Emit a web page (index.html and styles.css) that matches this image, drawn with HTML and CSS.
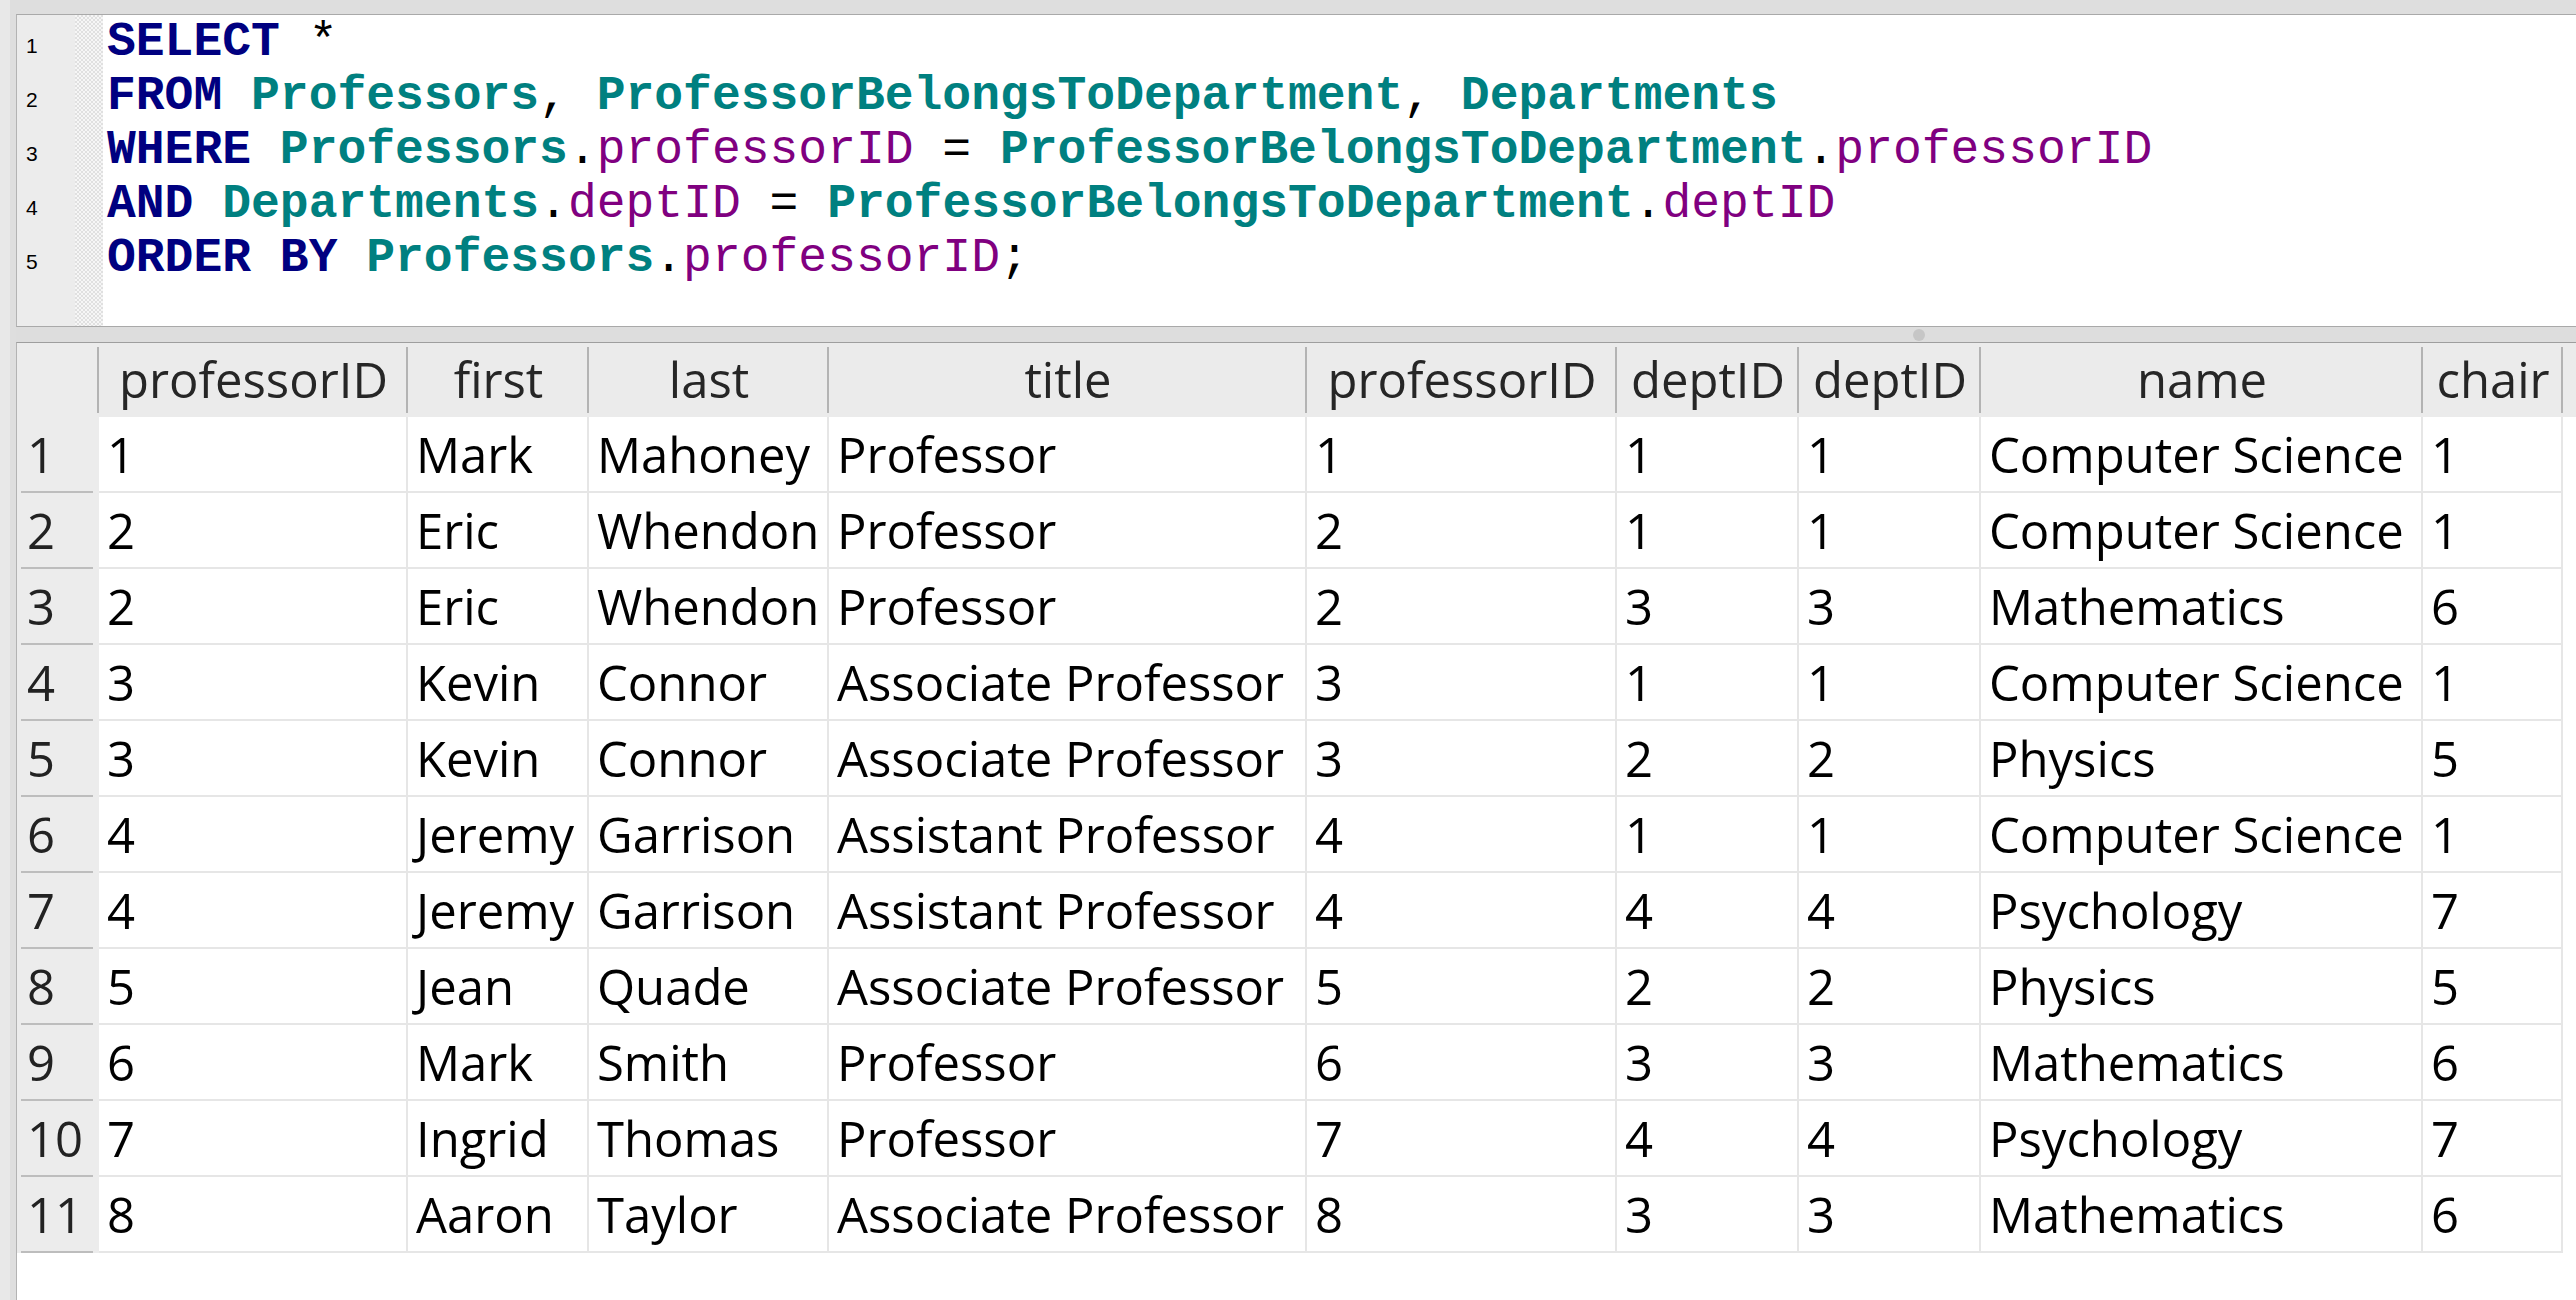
FILE: index.html
```html
<!DOCTYPE html>
<html>
<head>
<meta charset="utf-8">
<title>Query</title>
<link rel="stylesheet" href="styles.css">
</head>
<body>
<div class="window">
  <div class="editor">
    <div class="gutter">
      <div>1</div><div>2</div><div>3</div><div>4</div><div>5</div>
    </div>
    <div class="ruler"></div>
    <div class="code"><div><span class="kw">SELECT</span> *</div><div><span class="kw">FROM</span> <span class="tb">Professors</span>, <span class="tb">ProfessorBelongsToDepartment</span>, <span class="tb">Departments</span></div><div><span class="kw">WHERE</span> <span class="tb">Professors</span>.<span class="cl">professorID</span> = <span class="tb">ProfessorBelongsToDepartment</span>.<span class="cl">professorID</span></div><div><span class="kw">AND</span> <span class="tb">Departments</span>.<span class="cl">deptID</span> = <span class="tb">ProfessorBelongsToDepartment</span>.<span class="cl">deptID</span></div><div><span class="kw">ORDER BY</span> <span class="tb">Professors</span>.<span class="cl">professorID</span>;</div></div>
  </div>
  <div class="splitter"><span class="grip"></span></div>
  <div class="results">
    <div class="h rnh"></div><div class="h">professorID</div><div class="h">first</div><div class="h">last</div><div class="h">title</div><div class="h">professorID</div><div class="h">deptID</div><div class="h">deptID</div><div class="h">name</div><div class="h">chair</div><div class="hf"></div>

    <div class="rn">1</div><div class="c">1</div><div class="c">Mark</div><div class="c">Mahoney</div><div class="c">Professor</div><div class="c">1</div><div class="c">1</div><div class="c">1</div><div class="c">Computer Science</div><div class="c">1</div><div class="f"></div>
    <div class="rn">2</div><div class="c">2</div><div class="c">Eric</div><div class="c">Whendon</div><div class="c">Professor</div><div class="c">2</div><div class="c">1</div><div class="c">1</div><div class="c">Computer Science</div><div class="c">1</div><div class="f"></div>
    <div class="rn">3</div><div class="c">2</div><div class="c">Eric</div><div class="c">Whendon</div><div class="c">Professor</div><div class="c">2</div><div class="c">3</div><div class="c">3</div><div class="c">Mathematics</div><div class="c">6</div><div class="f"></div>
    <div class="rn">4</div><div class="c">3</div><div class="c">Kevin</div><div class="c">Connor</div><div class="c">Associate Professor</div><div class="c">3</div><div class="c">1</div><div class="c">1</div><div class="c">Computer Science</div><div class="c">1</div><div class="f"></div>
    <div class="rn">5</div><div class="c">3</div><div class="c">Kevin</div><div class="c">Connor</div><div class="c">Associate Professor</div><div class="c">3</div><div class="c">2</div><div class="c">2</div><div class="c">Physics</div><div class="c">5</div><div class="f"></div>
    <div class="rn">6</div><div class="c">4</div><div class="c">Jeremy</div><div class="c">Garrison</div><div class="c">Assistant Professor</div><div class="c">4</div><div class="c">1</div><div class="c">1</div><div class="c">Computer Science</div><div class="c">1</div><div class="f"></div>
    <div class="rn">7</div><div class="c">4</div><div class="c">Jeremy</div><div class="c">Garrison</div><div class="c">Assistant Professor</div><div class="c">4</div><div class="c">4</div><div class="c">4</div><div class="c">Psychology</div><div class="c">7</div><div class="f"></div>
    <div class="rn">8</div><div class="c">5</div><div class="c">Jean</div><div class="c">Quade</div><div class="c">Associate Professor</div><div class="c">5</div><div class="c">2</div><div class="c">2</div><div class="c">Physics</div><div class="c">5</div><div class="f"></div>
    <div class="rn">9</div><div class="c">6</div><div class="c">Mark</div><div class="c">Smith</div><div class="c">Professor</div><div class="c">6</div><div class="c">3</div><div class="c">3</div><div class="c">Mathematics</div><div class="c">6</div><div class="f"></div>
    <div class="rn">10</div><div class="c">7</div><div class="c">Ingrid</div><div class="c">Thomas</div><div class="c">Professor</div><div class="c">7</div><div class="c">4</div><div class="c">4</div><div class="c">Psychology</div><div class="c">7</div><div class="f"></div>
    <div class="rn">11</div><div class="c">8</div><div class="c">Aaron</div><div class="c">Taylor</div><div class="c">Associate Professor</div><div class="c">8</div><div class="c">3</div><div class="c">3</div><div class="c">Mathematics</div><div class="c">6</div><div class="f"></div>
  </div>
</div>
</body>
</html>
```

FILE: styles.css
```css
html, body {
  margin: 0;
  padding: 0;
}
body {
  background: #e8e8e8;
  font-family: "Open Sans", "Noto Sans", sans-serif;
  overflow: hidden;
}
.window {
  margin-left: 10px;
  height: 1300px;
  box-sizing: border-box;
  padding: 14px 0 0 6px;
  background: #dedede;
  display: flex;
  flex-direction: column;
  overflow: hidden;
}
.editor {
  height: 313px;
  flex: none;
  box-sizing: border-box;
  border-top: 1px solid #a9a9a9;
  border-bottom: 1px solid #a9a9a9;
  border-left: 1px solid #b3b3b3;
  background: #ffffff;
  display: grid;
  grid-template-columns: 58px 28px 1fr;
}
.gutter {
  background: #ececec;
  padding: 4px 0 0 9px;
  font-family: "Liberation Sans", Arial, sans-serif;
  font-size: 21px;
  line-height: 54px;
  color: #000;
}
.ruler {
  background-color: #f4f4f4;
  background-image: repeating-conic-gradient(#e0e0e0 0% 25%, #f6f6f6 0% 50%);
  background-size: 4px 4px;
}
.code {
  padding-left: 4px;
  font-family: "Liberation Mono", "Courier New", monospace;
  font-size: 48px;
  line-height: 54px;
  white-space: pre;
  color: #000;
}
.kw {
  color: #000080;
  font-weight: bold;
}
.tb {
  color: #008080;
  font-weight: bold;
}
.cl {
  color: #800080;
}
.splitter {
  height: 15px;
  flex: none;
  display: flex;
  align-items: center;
  background: #dddddd;
}
.grip {
  width: 12px;
  height: 12px;
  border-radius: 50%;
  background: #c6c6c6;
  margin-left: 1897px;
}
.results {
  flex: 1;
  background: #ffffff;
  border-top: 1px solid #9e9e9e;
  border-left: 1px solid #b3b3b3;
  display: grid;
  grid-template-columns: 82px 309px 181px 240px 478px 310px 182px 182px 442px 140px 1fr;
  grid-template-rows: 74px;
  grid-auto-rows: 76px;
  align-content: start;
  font-size: 49px;
}
.h {
  box-sizing: border-box;
  display: flex;
  align-items: center;
  justify-content: center;
  padding-bottom: 3px;
  color: #262626;
  white-space: nowrap;
  overflow: hidden;
  background: linear-gradient(#b3b3b3, #b3b3b3) right center / 2px 66px no-repeat, #ebebeb;
}
.rnh {
  background: linear-gradient(#b3b3b3, #b3b3b3) right center / 2px 66px no-repeat, #ececec;
}
.hf {
  background: #ebebeb;
}
.rn {
  box-sizing: border-box;
  display: flex;
  align-items: center;
  padding: 0 0 2px 10px;
  color: #222;
  white-space: nowrap;
  background: linear-gradient(#bdbdbd, #bdbdbd) 4px 100% / 72px 2px no-repeat, #ececec;
}
.c {
  box-sizing: border-box;
  display: flex;
  align-items: center;
  padding-left: 8px;
  color: #000;
  white-space: nowrap;
  overflow: hidden;
  border-right: 2px solid #e6e6e6;
  border-bottom: 2px solid #e6e6e6;
}
.f {
  background: #fff;
}
```
